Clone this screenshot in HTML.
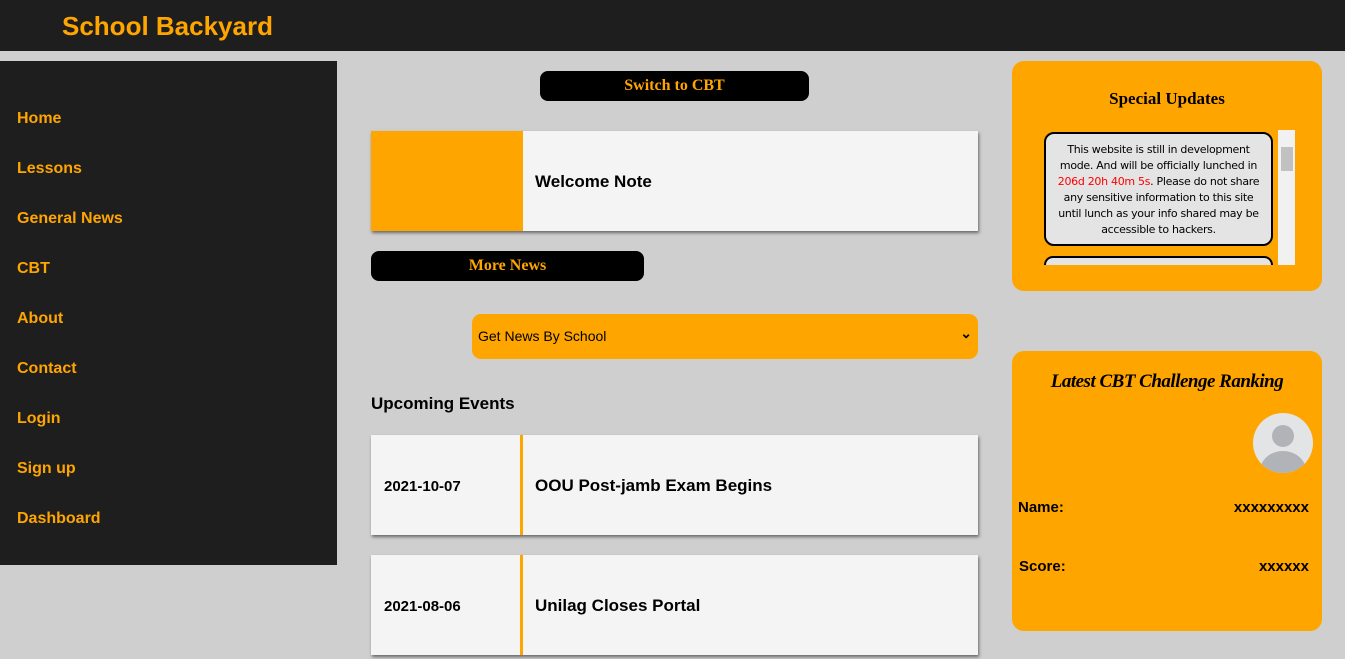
<!DOCTYPE html>
<html><head><meta charset="utf-8"><style>
*{box-sizing:border-box;margin:0;padding:0}
body{width:1345px;height:620px;overflow:hidden;background:#cfcfcf;font-family:"Liberation Sans",sans-serif;position:relative}
.hdr{position:absolute;left:0;top:0;width:1345px;height:51px;background:#1e1e1e}
.hdr h1{position:absolute;left:62px;top:11px;font-size:26px;color:#ffa500;font-weight:bold}
.side{position:absolute;left:0;top:61px;width:337px;height:504px;background:#1e1e1e}
.side a{position:absolute;left:17px;color:#ffa500;font-weight:bold;font-size:16px;text-decoration:none}
.btn{position:absolute;background:#000;color:#ffa500;font-family:"Liberation Serif",serif;font-weight:bold;font-size:16px;text-align:center;border-radius:8px;height:30px;line-height:30px}
.card{position:absolute;left:371px;width:607px;height:100px;background:#f4f4f4;box-shadow:1px 2px 3px rgba(0,0,0,.5)}
.card .l{position:absolute;left:0;top:0;width:152px;height:100px;font-weight:bold;font-size:15px;padding-left:13px;line-height:104px}
.card .t{position:absolute;left:164px;top:0;line-height:102px;font-weight:bold;font-size:17px}
.sel{position:absolute;left:472px;top:314px;width:506px;height:45px;background:#ffa500;border-radius:9px;font-size:14px;padding-left:6px;line-height:45px}
.box{position:absolute;left:1012px;width:310px;background:#ffa500;border-radius:12px}
</style></head><body>
<div class="hdr"><h1>School Backyard</h1></div>
<div class="side">
<a style="top:49px">Home</a><a style="top:99px">Lessons</a><a style="top:149px">General News</a><a style="top:199px">CBT</a><a style="top:249px">About</a><a style="top:299px">Contact</a><a style="top:349px">Login</a><a style="top:399px">Sign up</a><a style="top:449px">Dashboard</a>
</div>
<div class="btn" style="left:540px;top:71px;width:269px">Switch to CBT</div>
<div class="card" style="top:131px"><div class="l" style="background:#ffa500"></div><div class="t">Welcome Note</div></div>
<div class="btn" style="left:371px;top:251px;width:273px">More News</div>
<div class="sel">Get News By School<span style="position:absolute;right:6px;top:-3px;font-size:14px;font-weight:bold">&#8964;</span></div>
<div style="position:absolute;left:371px;top:394px;font-weight:bold;font-size:17px">Upcoming Events</div>
<div class="card" style="top:435px"><div class="l" style="border-right:3px solid #ffa500">2021-10-07</div><div class="t">OOU Post-jamb Exam Begins</div></div>
<div class="card" style="top:555px"><div class="l" style="border-right:3px solid #ffa500">2021-08-06</div><div class="t">Unilag Closes Portal</div></div>
<div class="box" style="top:61px;height:230px">
<div style="position:absolute;top:28px;width:100%;text-align:center;font-family:'Liberation Serif',serif;font-weight:bold;font-size:17px">Special Updates</div>
<div style="position:absolute;left:32px;top:71px;width:229px;height:114px;background:#e4e4e4;border:2px solid #000;border-radius:10px;font-family:'DejaVu Sans',sans-serif;font-size:11px;line-height:16px;text-align:center;padding:8px 6px;letter-spacing:-.3px">This website is still in development mode. And will be officially lunched in <span style="color:red">206d 20h 40m 5s</span>. Please do not share any sensitive information to this site until lunch as your info shared may be accessible to hackers.</div>
<div style="position:absolute;left:32px;top:195px;width:229px;height:9px;background:#e4e4e4;border:2px solid #000;border-bottom:none;border-radius:10px 10px 0 0"></div>
<div style="position:absolute;left:266px;top:69px;width:17px;height:135px;background:#f1f1f1"><div style="position:absolute;left:3px;top:17px;width:12px;height:24px;background:#c1c1c1"></div></div>
</div>
<div class="box" style="top:351px;height:280px">
<div style="position:absolute;top:20px;width:100%;text-align:center;font-family:'Liberation Serif',serif;font-style:italic;font-weight:bold;font-size:19px;letter-spacing:-.5px">Latest CBT Challenge Ranking</div>
<div style="position:absolute;left:241px;top:62px;width:60px;height:60px;border-radius:50%;background:#e2e4e6;overflow:hidden"><div style="position:absolute;left:19px;top:12px;width:22px;height:22px;border-radius:50%;background:#b0b4b8"></div><div style="position:absolute;left:7px;top:38px;width:46px;height:40px;border-radius:50%;background:#b0b4b8"></div></div>
<div style="position:absolute;left:6px;top:148px;font-weight:bold;font-size:15px">Name:</div><div style="position:absolute;right:13px;top:148px;font-weight:bold;font-size:15px">xxxxxxxxx</div>
<div style="position:absolute;left:7px;top:207px;font-weight:bold;font-size:15px">Score:</div><div style="position:absolute;right:13px;top:207px;font-weight:bold;font-size:15px">xxxxxx</div>
</div>
</body></html>
